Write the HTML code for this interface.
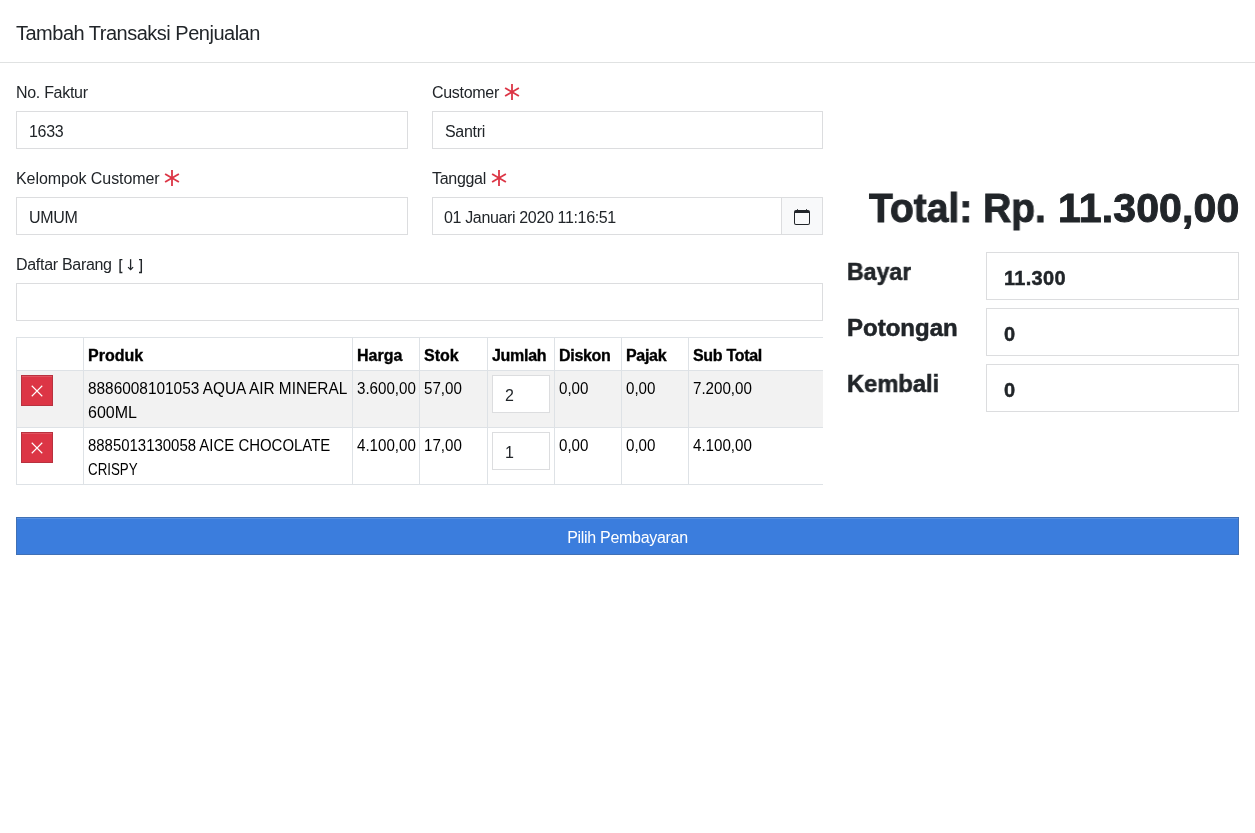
<!DOCTYPE html>
<html>
<head>
<meta charset="utf-8">
<style>
* { box-sizing: border-box; }
html, body { margin: 0; padding: 0; background: #fff; }
body { -webkit-font-smoothing: antialiased; }
.a { will-change: transform; }
body { width: 1255px; height: 833px; overflow: hidden; position: relative;
  font-family: "Liberation Sans", sans-serif; font-size: 16px; line-height: 24px; color: #212529; letter-spacing: -0.3px; }
.a { position: absolute; white-space: nowrap; }
.hdr { left: 0; top: 0; width: 1255px; height: 63px; border-bottom: 1px solid #e0e2e2; }
.title { left: 16px; top: 18px; font-size: 20px; line-height: 30px; letter-spacing: -0.5px; }
.lbl { line-height: 24px; }
.inp { border: 1px solid #dcdddf; height: 38px; padding: 8px 12px 0 12px; line-height: 24px; background: #fff; }
.req { display: inline-block; vertical-align: top; }
.addon { background: #f8f9fa; border: 1px solid #dcdddf; height: 38px; }
table { border-collapse: collapse; table-layout: fixed; }
.tbl { left: 16px; top: 337px; width: 808px; }
.tbl td, .tbl th { color: #000; white-space: normal; border: 1px solid #dee2e6; padding: 6px 4px 2px 4px; vertical-align: top; text-align: left; line-height: 24px; }
.tbl th { font-weight: bold; -webkit-text-stroke: 0.35px #000; }
.sx { display: inline-block; transform-origin: 0 50%; letter-spacing: 0; white-space: nowrap; }
.tbl tr.s td { background: #f2f2f2; }
.btnx { margin-top: -2px; position: relative; display: block; width: 32px; height: 31px; background: #dc3545; border: 1px solid #b8323f; box-shadow: inset 0 1px 0 rgba(255,255,255,.15); }
.qty { color: #212529; margin-top: -2px; width: 58px; height: 38px; border: 1px solid #dcdddf; background: #fff; padding: 8px 12px 0; }
.total { right: 15px; top: 184px; font-size: 41px; line-height: 48px; font-weight: bold; letter-spacing: -0.3px; -webkit-text-stroke: 0.95px #212529; }
.h4 { left: 847px; letter-spacing: 0; -webkit-text-stroke: 0.55px #212529; font-size: 24px; line-height: 29px; font-weight: bold; }
.inpl { left: 986px; width: 253px; height: 48px; border: 1px solid #dcdddf; padding: 10px 16px 0 17px; font-size: 20px; line-height: 30px; font-weight: bold; letter-spacing: 0.3px; -webkit-text-stroke: 0.45px #212529; }
.btn { left: 16px; top: 517px; width: 1223px; height: 38px; background: #3b7ddd; border: 1px solid #4070b5; box-shadow: inset 0 1px 0 rgba(255,255,255,.15); color: #fff; text-align: center; padding-top: 8px; }
</style>
</head>
<body>
<div class="a hdr"></div>
<div class="a title">Tambah Transaksi Penjualan</div>

<div class="a lbl" style="left:16px;top:81px;">No. Faktur</div>
<div class="a inp" style="left:16px;top:111px;width:392px;">1633</div>

<div class="a lbl" style="left:432px;top:81px;">Customer</div>
<svg class="a" style="left:504px;top:84px" width="16" height="16" viewBox="0 0 16 16"><g stroke="#dc3545" stroke-width="1.8"><line x1="8" y1="0" x2="8" y2="16"/><line x1="1.1" y1="4" x2="14.9" y2="12"/><line x1="1.1" y1="12" x2="14.9" y2="4"/></g></svg>
<div class="a inp" style="left:432px;top:111px;width:391px;">Santri</div>

<div class="a lbl" style="left:16px;top:167px;letter-spacing:-0.08px;">Kelompok Customer</div>
<svg class="a" style="left:164px;top:170px" width="16" height="16" viewBox="0 0 16 16"><g stroke="#dc3545" stroke-width="1.8"><line x1="8" y1="0" x2="8" y2="16"/><line x1="1.1" y1="4" x2="14.9" y2="12"/><line x1="1.1" y1="12" x2="14.9" y2="4"/></g></svg>
<div class="a inp" style="left:16px;top:197px;width:392px;">UMUM</div>

<div class="a lbl" style="left:432px;top:167px;">Tanggal</div>
<svg class="a" style="left:491px;top:170px" width="16" height="16" viewBox="0 0 16 16"><g stroke="#dc3545" stroke-width="1.8"><line x1="8" y1="0" x2="8" y2="16"/><line x1="1.1" y1="4" x2="14.9" y2="12"/><line x1="1.1" y1="12" x2="14.9" y2="4"/></g></svg>
<div class="a inp" style="left:432px;top:197px;width:350px;padding-left:11px;letter-spacing:-0.35px;">01 Januari 2020 11:16:51</div>
<div class="a addon" style="left:781px;top:197px;width:42px;"></div>
<svg class="a" style="left:794px;top:209px" width="16" height="16" viewBox="0 0 16 16"><path fill="#212529" d="M3.5 0a.5.5 0 0 1 .5.5V1h8V.5a.5.5 0 0 1 1 0V1h1a2 2 0 0 1 2 2v11a2 2 0 0 1-2 2H2a2 2 0 0 1-2-2V3a2 2 0 0 1 2-2h1V.5a.5.5 0 0 1 .5-.5zM1 4v10a1 1 0 0 0 1 1h12a1 1 0 0 0 1-1V4H1z"/></svg>

<div class="a lbl" style="left:16px;top:253px;">Daftar Barang</div>
<svg class="a" style="left:110px;top:250px" width="40" height="30" viewBox="110 250 40 30"><g fill="none" stroke="#212529" stroke-width="1.3"><path d="M122.4 259.6H120.1V272.4H122.4" stroke-width="1.45"/><path d="M139 259.6H141.3V272.4H139" stroke-width="1.45"/><path d="M130.6 259.2V269.6"/><path d="M128.1 267.1L130.6 269.6L133.1 267.1"/></g></svg>
<div class="a inp" style="left:16px;top:283px;width:807px;"></div>

<div class="a" style="left:16px;top:337px;width:807px;height:150px;overflow:hidden;">
<table class="tbl" style="width:808px;">
<colgroup><col style="width:67px"><col style="width:269px"><col style="width:67px"><col style="width:68px"><col style="width:67px"><col style="width:67px"><col style="width:67px"><col style="width:136px"></colgroup>
<tr><th></th><th style="letter-spacing:0">Produk</th><th style="letter-spacing:0">Harga</th><th style="letter-spacing:0">Stok</th><th>Jumlah</th><th>Diskon</th><th>Pajak</th><th>Sub Total</th></tr>
<tr class="s"><td><span class="btnx"><svg width="14" height="14" viewBox="0 0 16 16" style="position:absolute;left:8px;top:8px"><path stroke="#fff" stroke-width="1.3" d="M2 2L14 14M14 2L2 14"/></svg></span></td><td style="white-space:nowrap"><span class="sx" style="transform:scaleX(0.962)">8886008101053 AQUA AIR MINERAL</span><br><span class="sx" style="transform:scaleX(1)">600ML</span></td><td><span class="sx" style="transform:scaleX(0.945)">3.600,00</span></td><td><span class="sx" style="transform:scaleX(0.945)">57,00</span></td><td><div class="qty">2</div></td><td><span class="sx" style="transform:scaleX(0.945)">0,00</span></td><td><span class="sx" style="transform:scaleX(0.945)">0,00</span></td><td><span class="sx" style="transform:scaleX(0.945)">7.200,00</span></td></tr>
<tr><td><span class="btnx"><svg width="14" height="14" viewBox="0 0 16 16" style="position:absolute;left:8px;top:8px"><path stroke="#fff" stroke-width="1.3" d="M2 2L14 14M14 2L2 14"/></svg></span></td><td style="white-space:nowrap"><span class="sx" style="transform:scaleX(0.934)">8885013130058 AICE CHOCOLATE</span><br><span class="sx" style="transform:scaleX(0.833)">CRISPY</span></td><td><span class="sx" style="transform:scaleX(0.945)">4.100,00</span></td><td><span class="sx" style="transform:scaleX(0.945)">17,00</span></td><td><div class="qty">1</div></td><td><span class="sx" style="transform:scaleX(0.945)">0,00</span></td><td><span class="sx" style="transform:scaleX(0.945)">0,00</span></td><td><span class="sx" style="transform:scaleX(0.945)">4.100,00</span></td></tr>
</table>
</div>

<div class="a total" style="left:869px;right:auto;letter-spacing:0;transform:scaleX(0.951);transform-origin:0 50%;">Total: Rp.</div>
<div class="a total" style="right:15.5px;letter-spacing:0.15px;">11.300,00</div>
<div class="a h4" style="top:257px;transform:scaleX(0.962);transform-origin:0 50%;">Bayar</div>
<div class="a inpl" style="top:252px;">11.300</div>
<div class="a h4" style="top:313px;">Potongan</div>
<div class="a inpl" style="top:308px;">0</div>
<div class="a h4" style="top:369px;transform:scaleX(0.987);transform-origin:0 50%;">Kembali</div>
<div class="a inpl" style="top:364px;">0</div>

<div class="a btn">Pilih Pembayaran</div>
</body>
</html>
